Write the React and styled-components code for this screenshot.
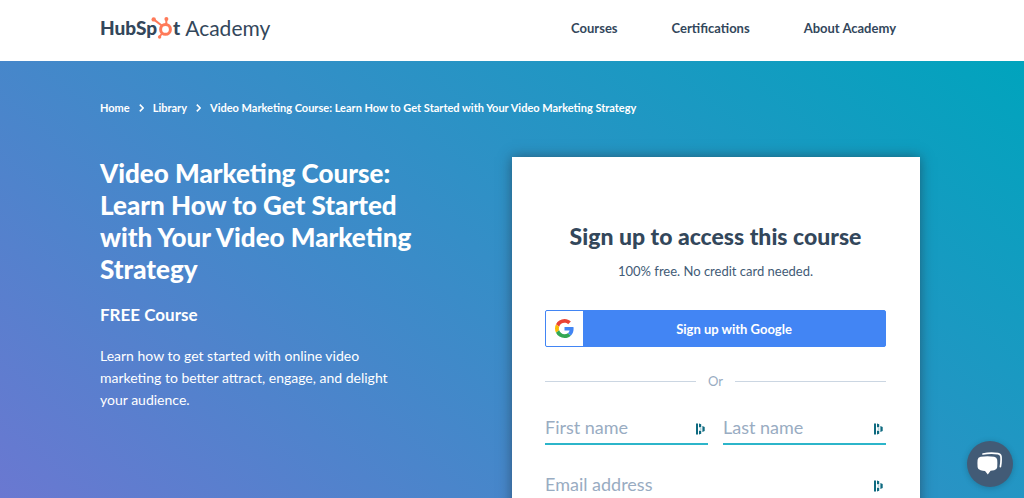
import styled, { createGlobalStyle } from 'styled-components';

const colors = {
  ink: '#33475b',
  slate: '#425b76',
  muted: '#99acc2',
  line: '#cbd6e2',
  orange: '#ff7a59',
  teal: '#00a4bd',
  underline: '#2cb5ca',
  purple: '#6a78d1',
  google: '#4285f4',
};

const navItems = ['Courses', 'Certifications', 'About Academy'];

const App = () => {
  return (
    <>
      <GlobalStyle />
      <Page>
        <Header>
          <Logo href="#" aria-label="HubSpot Academy">
            <strong>HubSp</strong>
            <Sprocket />
            <strong>t</strong>
            <span>Academy</span>
          </Logo>
          <Nav>
            {navItems.map((item) => (
              <a href="#" key={item}>
                {item}
              </a>
            ))}
          </Nav>
        </Header>
        <Hero>
          <Breadcrumbs aria-label="Breadcrumb">
            <a href="#">Home</a>
            <Chevron />
            <a href="#">Library</a>
            <Chevron />
            <span>
              Video Marketing Course: Learn How to Get Started with Your Video Marketing Strategy
            </span>
          </Breadcrumbs>
          <Columns>
            <Intro>
              <h1>Video Marketing Course: Learn How to Get Started with Your Video Marketing Strategy</h1>
              <h2>FREE Course</h2>
              <p>
                Learn how to get started with online video marketing to better attract, engage, and
                delight your audience.
              </p>
            </Intro>
            <SignUpCard />
          </Columns>
        </Hero>
        <ChatButton type="button" aria-label="Open chat">
          <ChatIcon />
        </ChatButton>
      </Page>
    </>
  );
};

const SignUpCard = () => {
  return (
    <Card>
      <h2>Sign up to access this course</h2>
      <p>100% free. No credit card needed.</p>
      <GoogleButton type="button">
        <span className={'icon'}>
          <GoogleIcon />
        </span>
        <span className={'text'}>Sign up with Google</span>
      </GoogleButton>
      <Divider>Or</Divider>
      <Fields>
        <Field id="firstname" label="First name" />
        <Field id="lastname" label="Last name" />
        <Field id="email" label="Email address" type="email" wide />
      </Fields>
    </Card>
  );
};

const Field = ({ id, label, type = 'text', wide }) => {
  return (
    <FieldLabel htmlFor={id} $wide={wide}>
      <input id={id} name={id} type={type} placeholder={label} aria-label={label} />
      <AutofillIcon />
    </FieldLabel>
  );
};

const Sprocket = () => (
  <svg width="22" height="24" viewBox="0 0 22 24" fill="none" stroke={colors.orange}>
    <circle cx="14.5" cy="13.4" r="4.9" strokeWidth="3" />
    <path d="M3 3.6 L11 9.8" strokeWidth="2" />
    <path d="M15.3 3.5 V9" strokeWidth="2" />
    <path d="M11.4 17 L8.6 20.6" strokeWidth="1.8" />
    <circle cx="2.7" cy="3.4" r="2.2" fill={colors.orange} stroke="none" />
    <circle cx="15.4" cy="3" r="2" fill={colors.orange} stroke="none" />
    <circle cx="8.6" cy="21" r="1.7" fill={colors.orange} stroke="none" />
  </svg>
);

const Chevron = () => (
  <svg width="5" height="8" viewBox="0 0 5 8" fill="none" stroke="#fff" strokeWidth="1.6">
    <path d="M0.8 0.6 L4.2 4 L0.8 7.4" />
  </svg>
);

const GoogleIcon = () => (
  <svg width="19" height="19" viewBox="0 0 48 48">
    <path
      fill="#ea4335"
      d="M24 9.5c3.54 0 6.71 1.22 9.21 3.6l6.85-6.85C35.9 2.38 30.47 0 24 0 14.62 0 6.51 5.38 2.56 13.22l7.98 6.19C12.43 13.72 17.74 9.5 24 9.5z"
    />
    <path
      fill="#4285f4"
      d="M46.98 24.55c0-1.57-.15-3.09-.38-4.55H24v9.02h12.94c-.58 2.96-2.26 5.48-4.78 7.18l7.73 6c4.51-4.18 7.09-10.36 7.09-17.65z"
    />
    <path
      fill="#fbbc05"
      d="M10.53 28.59c-.48-1.45-.76-2.99-.76-4.59s.27-3.14.76-4.59l-7.98-6.19C.92 16.46 0 20.12 0 24c0 3.88.92 7.54 2.56 10.78l7.97-6.19z"
    />
    <path
      fill="#34a853"
      d="M24 48c6.48 0 11.93-2.13 15.89-5.81l-7.73-6c-2.15 1.45-4.92 2.3-8.16 2.3-6.26 0-11.57-4.22-13.47-9.91l-7.98 6.19C6.51 42.62 14.62 48 24 48z"
    />
  </svg>
);

const AutofillIcon = () => (
  <svg width="9" height="12" viewBox="0 0 9 12" fill="#0e6a80">
    <path d="M0 0.5h2v11h-2z" />
    <path d="M3 0.5l2.2 0.7v3h-2.2z" />
    <path d="M3 7.8h2.2v3l-2.2 0.7z" />
    <path d="M3.8 4.8h1.6v2.4h-1.6z" opacity="0.3" />
    <path d="M6.4 3l2.3 1v4l-2.3 1z" />
  </svg>
);

const ChatIcon = () => (
  <svg width="26" height="24" viewBox="0 0 26 24" fill="#fff">
    <path d="M3.6 4.8 Q10.5 3.6 17.2 4.8 Q19.8 5.2 20.2 7.8 Q20.6 11.5 20.2 15.2 Q19.8 17.8 17.2 18.2 Q15.4 18.6 13.6 18.8 L10.8 22.6 L8 18.9 Q5.8 18.7 3.6 18.2 Q1 17.8 0.6 15.2 Q0.2 11.5 0.6 7.8 Q1 5.2 3.6 4.8z" />
    <path
      d="M6 2 Q13.4 0.4 21 1.6 Q23.6 2 24 4.6 Q24.4 9.6 23.4 14.6"
      fill="none"
      stroke="#fff"
      strokeWidth="1.7"
      strokeLinecap="round"
    />
  </svg>
);

const GlobalStyle = createGlobalStyle`
  * {
    box-sizing: border-box;
  }
  body {
    margin: 0;
    font-family: Lato, 'Liberation Sans', sans-serif;
    color: ${colors.ink};
  }
  h1, h2, p {
    margin: 0;
  }
  a {
    color: inherit;
    text-decoration: none;
  }
  button, input {
    font-family: inherit;
  }
`;

const Page = styled.div`
  display: flex;
  flex-direction: column;
  height: 100vh;
`;

const Header = styled.header`
  display: flex;
  align-items: center;
  justify-content: space-between;
  flex: none;
  height: 61px;
  padding: 0 128px 5px 100px;
  background: #fff;
`;

const Logo = styled.a`
  display: flex;
  align-items: center;
  font-size: 19px;
  line-height: 24px;
  strong {
    font-weight: 900;
  }
  svg {
    margin-left: -6px;
  }
  span {
    margin-left: 5px;
    font-size: 21px;
  }
`;

const Nav = styled.nav`
  display: flex;
  gap: 54px;
  font-size: 13px;
  font-weight: 700;
  line-height: 18px;
`;

const Hero = styled.main`
  flex: 1;
  min-height: 0;
  overflow-y: auto;
  scrollbar-width: none;
  padding: 38px 104px 0 100px;
  background: linear-gradient(40deg, ${colors.purple}, ${colors.teal});
`;

const Breadcrumbs = styled.nav`
  display: flex;
  align-items: center;
  gap: 9px;
  color: #fff;
  font-size: 11px;
  font-weight: 700;
  line-height: 18px;
`;

const Columns = styled.div`
  display: grid;
  grid-template-columns: repeat(2, minmax(0, 1fr));
  align-items: start;
  gap: 4px;
  margin-top: 40px;
`;

const Intro = styled.section`
  padding-right: 84px;
  color: #fff;
  h1 {
    font-size: 26px;
    font-weight: 900;
    line-height: 32px;
  }
  h2 {
    margin-top: 18px;
    font-size: 17px;
    font-weight: 700;
    line-height: 24px;
  }
  p {
    margin-top: 18px;
    padding-right: 20px;
    font-size: 14px;
    line-height: 22px;
  }
`;

const Card = styled.section`
  min-height: 480px;
  padding: 63px 34px 40px 33px;
  background: #fff;
  box-shadow: 0 0 12px rgba(33, 51, 67, 0.6);
  text-align: center;
  h2 {
    font-size: 23px;
    font-weight: 900;
    line-height: 32px;
  }
  p {
    margin-top: 9px;
    color: ${colors.slate};
    font-size: 13px;
    line-height: 20px;
  }
`;

const GoogleButton = styled.button`
  display: flex;
  width: 100%;
  height: 37px;
  margin-top: 29px;
  padding: 0;
  overflow: hidden;
  border: 1px solid ${colors.google};
  border-radius: 2px;
  background: ${colors.google};
  color: #fff;
  cursor: pointer;
  .icon {
    display: flex;
    align-items: center;
    justify-content: center;
    width: 37px;
    height: 100%;
    background: #fff;
  }
  .text {
    flex: 1;
    align-self: center;
    font-size: 13px;
    font-weight: 700;
    line-height: 18px;
  }
`;

const Divider = styled.div`
  display: flex;
  align-items: center;
  gap: 12px;
  margin-top: 24px;
  color: ${colors.muted};
  font-size: 13px;
  line-height: 20px;
  &::before,
  &::after {
    content: '';
    flex: 1;
    height: 1px;
    background: ${colors.line};
  }
`;

const Fields = styled.form`
  display: grid;
  grid-template-columns: repeat(2, minmax(0, 1fr));
  gap: 23px 15px;
  margin-top: 20px;
`;

const FieldLabel = styled.label`
  display: flex;
  align-items: center;
  grid-column: ${({ $wide }) => ($wide ? '1 / -1' : 'auto')};
  height: 34px;
  padding-right: 3px;
  border-bottom: 2px solid ${colors.underline};
  input {
    flex: 1;
    min-width: 0;
    padding: 0;
    border: 0;
    outline: 0;
    background: transparent;
    color: ${colors.ink};
    font-size: 18px;
    line-height: 24px;
  }
  input::placeholder {
    color: ${colors.muted};
  }
  svg {
    flex: none;
    margin-top: 4px;
  }
`;

const ChatButton = styled.button`
  position: fixed;
  right: 11px;
  bottom: 11px;
  display: flex;
  align-items: center;
  justify-content: center;
  width: 46px;
  height: 46px;
  padding: 0;
  border: 0;
  border-radius: 50%;
  background: ${colors.slate};
  box-shadow: 0 1px 6px rgba(0, 0, 0, 0.2);
  cursor: pointer;
`;

export default App;
